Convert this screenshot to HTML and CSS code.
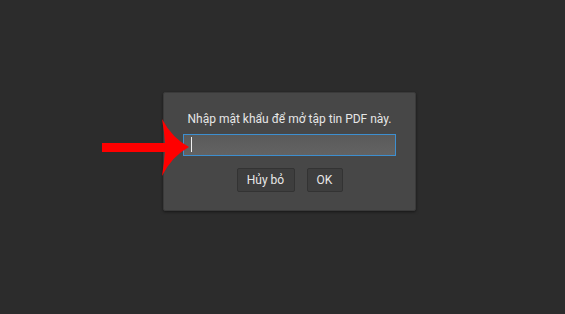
FILE: index.html
```html
<!DOCTYPE html>
<html>
<head>
<title>Mật khẩu PDF</title>
<meta charset="utf-8">
<link rel="stylesheet" href="styles.css">
</head>
<body>

<div class="screen">
    <div class="dialog">
        <p class="prompt">Nhập mật khẩu để mở tập tin PDF này.</p>
        <div class="field"><span class="caret"></span></div>
        <div class="actions">
            <button type="button" class="btn cancel">Hủy bỏ</button>
            <button type="button" class="btn ok">OK</button>
        </div>
    </div>

    <svg class="arrow" width="100" height="70" viewBox="100 112 100 70">
        <path d="M102,143 L165,143 Q164,130 162,119 Q172,138 189,147 Q172,156 162,176 Q164,163 165,152 L102,152 Z" fill="#ff0000"/>
    </svg>
</div>

</body>
</html>
```

FILE: styles.css
```css
html, body { margin: 0; padding: 0; }
body { background-color: #2c2c2c; font-family: Roboto, "Liberation Sans", sans-serif; color: #e6e6e6; }
.screen { position: relative; width: 565px; height: 314px; padding-top: 92px; box-sizing: border-box; padding-left: 163px; }
.dialog { width: 253px; height: 119px; box-sizing: border-box; background-color: #474747; border: 1px solid #3a3a3a; border-radius: 2px; box-shadow: 0 1px 3px rgba(0,0,0,0.5); padding: 18px 19px 0 19px; }
.prompt { margin: 0; font-size: 12px; line-height: 16px; text-align: center; color: #e6e6e6; white-space: nowrap; }
.field { margin-top: 7px; height: 22px; box-sizing: border-box; border: 1px solid #3d8fd0; background: linear-gradient(#5a5a5a, #636363); position: relative; }
.caret { position: absolute; left: 7px; top: 2px; width: 1px; height: 15px; background-color: #f0f0f0; }
.actions { display: flex; justify-content: center; gap: 12px; margin-top: 12px; }
.btn { height: 24px; box-sizing: border-box; border: 1px solid #333333; border-radius: 2px; background-color: #3e3e3e; color: #e8e8e8; font-family: inherit; font-size: 12px; padding: 0; }
.cancel { width: 58px; }
.ok { width: 36px; }
.arrow { position: absolute; left: 100px; top: 112px; }
```
